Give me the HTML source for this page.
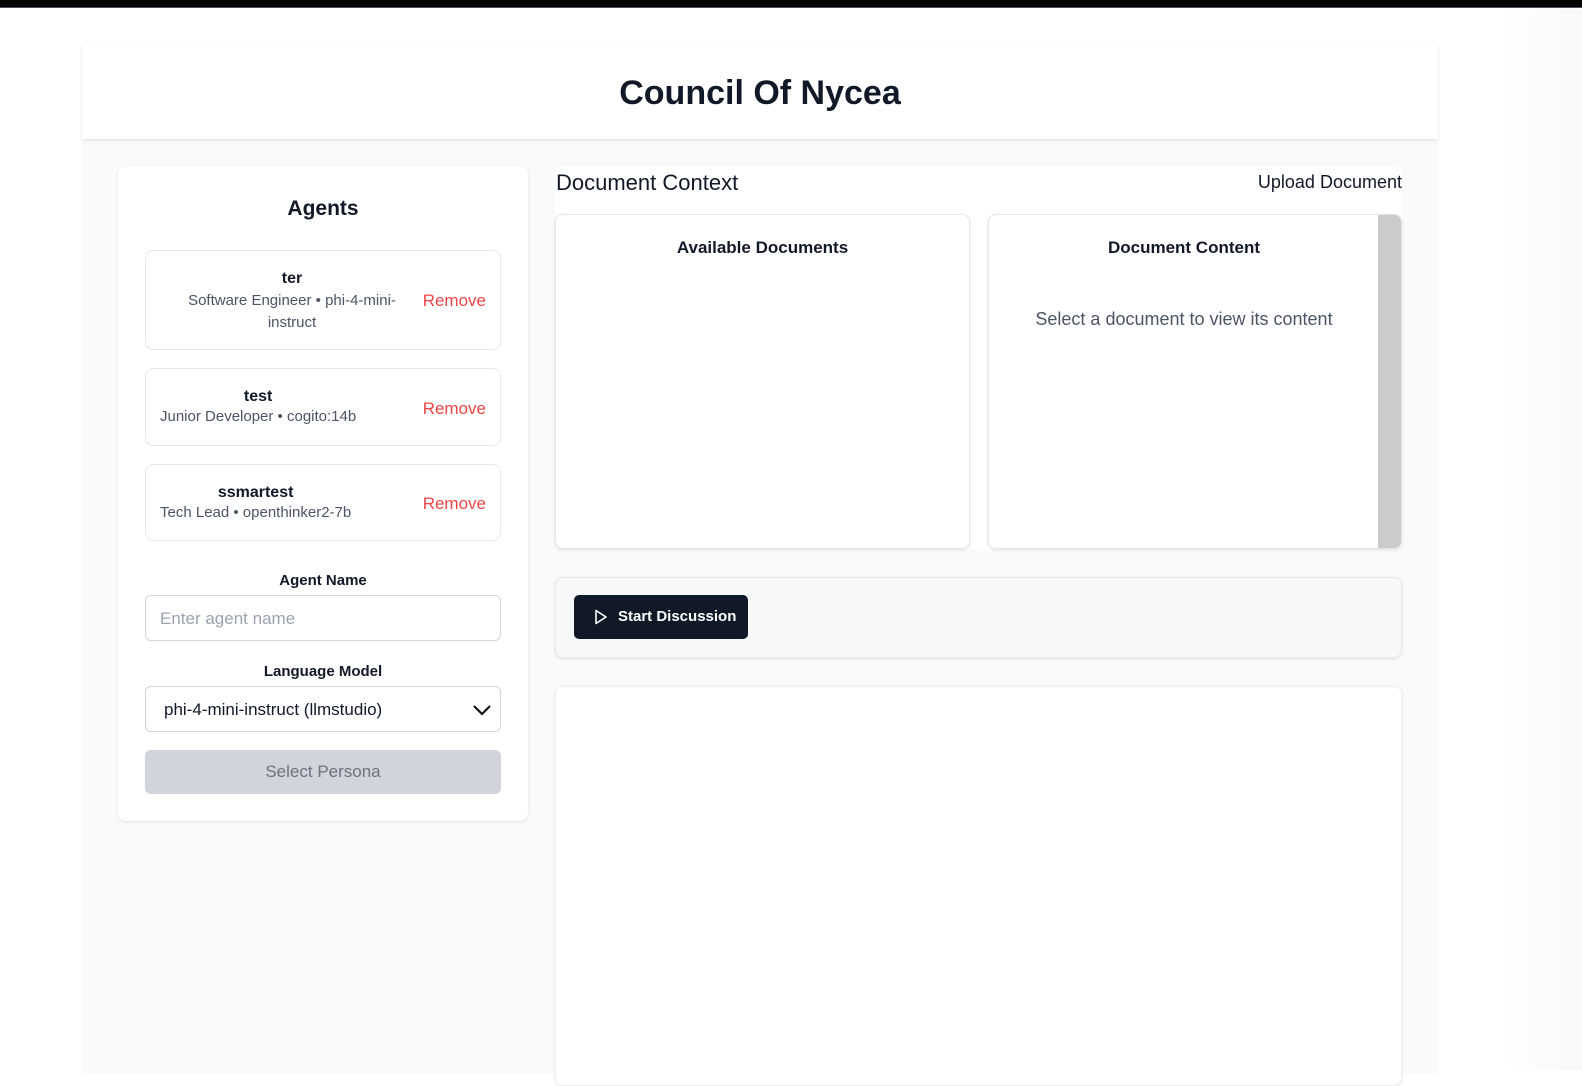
<!DOCTYPE html>
<html><head><style>
*{box-sizing:border-box;margin:0;padding:0}
body{width:1582px;height:1070px;overflow:hidden;background:#fff;font-family:"Liberation Sans",sans-serif;color:#111827;position:relative}
.topbar{position:absolute;left:0;top:0;width:1582px;height:8px;background:#050505;border-bottom:1px solid #4b5563}
.main{position:absolute;left:82px;top:44px;width:1356px;height:1030px;background:#f9fafb}
.header{position:absolute;left:82px;top:44px;width:1356px;height:95px;background:#fff;box-shadow:0 1px 3px rgba(0,0,0,.12);text-align:center}
.header h1{font-size:34px;font-weight:bold;line-height:98px;color:#111827}
.card{position:absolute;background:#fff;border-radius:8px;box-shadow:0 1px 3px rgba(0,0,0,.1)}
.agent{position:absolute;left:145px;width:356px;border:1px solid #e5e7eb;border-radius:8px;background:#fff}
.agent .n{font-weight:bold;font-size:16px;color:#111827}
.agent .d{font-size:15px;color:#4b5563;line-height:22px}
.rm{position:absolute;right:14px;color:#ef4444;font-size:17px}
.lbl{position:absolute;left:145px;width:356px;text-align:center;font-weight:bold;font-size:15px}
.inp{position:absolute;left:145px;width:356px;border:1px solid #d1d5db;border-radius:6px;background:#fff;font-size:17px;padding-left:14px}
</style></head><body>
<div class="topbar"></div>
<div class="main"></div>
<div class="header"><h1>Council Of Nycea</h1></div>

<div class="card" style="left:118px;top:166px;width:410px;height:655px"></div>
<div style="position:absolute;left:118px;top:197px;width:410px;text-align:center;font-size:21px;font-weight:bold">Agents</div>

<div class="agent" style="top:250px;height:100px">
 <div style="position:absolute;left:30px;top:19px;width:232px;text-align:center"><div class="n">ter</div><div class="d" style="margin-top:2px">Software Engineer • phi-4-mini-instruct</div></div>
 <div class="rm" style="top:40px">Remove</div>
</div>
<div class="agent" style="top:368px;height:78px">
 <div style="position:absolute;left:14px;top:19px"><div class="n" style="text-align:center">test</div><div class="d">Junior Developer • cogito:14b</div></div>
 <div class="rm" style="top:30px">Remove</div>
</div>
<div class="agent" style="top:464px;height:77px">
 <div style="position:absolute;left:14px;top:19px"><div class="n" style="text-align:center">ssmartest</div><div class="d">Tech Lead • openthinker2-7b</div></div>
 <div class="rm" style="top:29px">Remove</div>
</div>

<div class="lbl" style="top:572px">Agent Name</div>
<div class="inp" style="top:595px;height:46px;line-height:46px;color:#9ca3af">Enter agent name</div>
<div class="lbl" style="top:663px">Language Model</div>
<div class="inp" style="top:686px;height:46px;line-height:46px;color:#111827;padding-left:18px">phi-4-mini-instruct (llmstudio)
 <svg style="position:absolute;right:8px;top:15px" width="20" height="16" viewBox="0 0 20 16"><path d="M2 4l8 8 8-8" fill="none" stroke="#111" stroke-width="2.2"/></svg></div>
<div style="position:absolute;left:145px;top:750px;width:356px;height:44px;border-radius:6px;background:#d1d5db;color:#6b7280;text-align:center;line-height:44px;font-size:17px">Select Persona</div>

<div class="card" style="left:555px;top:166px;width:847px;height:383px;box-shadow:none"></div>
<div style="position:absolute;left:556px;top:170px;font-size:22px">Document Context</div>
<div style="position:absolute;right:180px;top:172px;font-size:18px">Upload Document</div>
<div class="card" style="left:555px;top:214px;width:415px;height:335px;border:1px solid #e5e7eb"></div>
<div style="position:absolute;left:555px;top:238px;width:415px;text-align:center;font-weight:bold;font-size:17px">Available Documents</div>
<div class="card" style="left:988px;top:214px;width:414px;height:335px;border:1px solid #e5e7eb;overflow:hidden">
 <div style="position:absolute;right:0;top:0;width:23px;height:335px;background:#cbcbcb"></div>
</div>
<div style="position:absolute;left:988px;top:238px;width:392px;text-align:center;font-weight:bold;font-size:17px">Document Content</div>
<div style="position:absolute;left:988px;top:309px;width:392px;text-align:center;font-size:18px;color:#4b5563">Select a document to view its content</div>

<div class="card" style="left:555px;top:577px;width:847px;height:81px;background:#f7f8fa;border:1px solid #e5e7eb"></div>
<div style="position:absolute;left:574px;top:595px;width:174px;height:44px;background:#111827;border-radius:5px;color:#fff;font-weight:bold;font-size:15px;line-height:44px;padding-left:44px">Start Discussion
 <svg style="position:absolute;left:20px;top:14px" width="14" height="16" viewBox="0 0 14 16"><path d="M2 1.5l10 6.5-10 6.5z" fill="none" stroke="#fff" stroke-width="1.6" stroke-linejoin="round"/></svg></div>

<div class="card" style="left:555px;top:686px;width:847px;height:400px;border:1px solid #eef0f2"></div>
<div style="position:absolute;left:1500px;top:9px;width:82px;height:1061px;background:linear-gradient(to right,#fff,#f9f9f9)"></div>
</body></html>
